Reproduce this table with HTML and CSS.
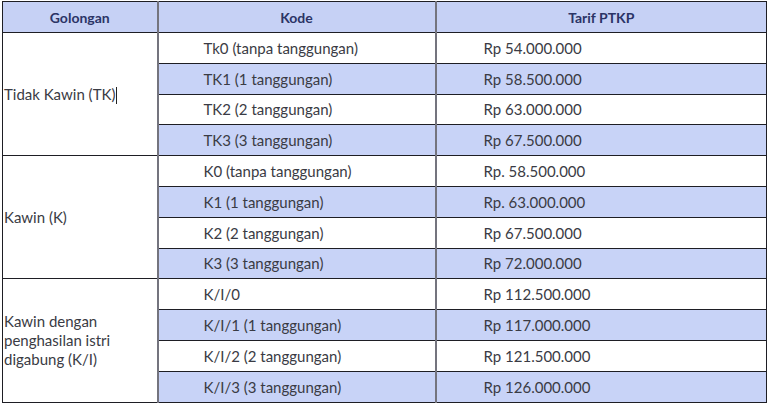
FILE: index.html
```html
<!DOCTYPE html>
<html lang="id">
<head>
<meta charset="utf-8">
<title>Tarif PTKP</title>
<link rel="stylesheet" href="styles.css">
</head>
<body>
<table class="ptkp">
  <colgroup>
    <col class="c-gol">
    <col class="c-kode">
    <col class="c-tarif">
  </colgroup>
  <thead>
    <tr><th>Golongan</th><th>Kode</th><th>Tarif PTKP</th></tr>
  </thead>
  <tbody class="grp">
    <tr><td class="gol" rowspan="4">Tidak Kawin (TK)<span class="caret"></span></td><td class="kode">Tk0 (tanpa tanggungan)</td><td class="tarif">Rp 54.000.000</td></tr>
    <tr class="alt"><td class="kode">TK1 (1 tanggungan)</td><td class="tarif">Rp 58.500.000</td></tr>
    <tr><td class="kode">TK2 (2 tanggungan)</td><td class="tarif">Rp 63.000.000</td></tr>
    <tr class="alt"><td class="kode">TK3 (3 tanggungan)</td><td class="tarif">Rp 67.500.000</td></tr>
  </tbody>
  <tbody class="grp">
    <tr><td class="gol" rowspan="4">Kawin (K)</td><td class="kode">K0 (tanpa tanggungan)</td><td class="tarif">Rp. 58.500.000</td></tr>
    <tr class="alt"><td class="kode">K1 (1 tanggungan)</td><td class="tarif">Rp. 63.000.000</td></tr>
    <tr><td class="kode">K2 (2 tanggungan)</td><td class="tarif">Rp 67.500.000</td></tr>
    <tr class="alt"><td class="kode">K3 (3 tanggungan)</td><td class="tarif">Rp 72.000.000</td></tr>
  </tbody>
  <tbody class="grp">
    <tr><td class="gol" rowspan="4">Kawin dengan<br>penghasilan istri<br>digabung (K/I)</td><td class="kode">K/I/0</td><td class="tarif">Rp 112.500.000</td></tr>
    <tr class="alt"><td class="kode">K/I/1 (1 tanggungan)</td><td class="tarif">Rp 117.000.000</td></tr>
    <tr><td class="kode">K/I/2 (2 tanggungan)</td><td class="tarif">Rp 121.500.000</td></tr>
    <tr class="alt"><td class="kode">K/I/3 (3 tanggungan)</td><td class="tarif">Rp 126.000.000</td></tr>
  </tbody>
</table>
</body>
</html>
```
FILE: styles.css
```css
html, body {
  margin: 0;
  padding: 0;
  background: #ffffff;
}
body {
  padding: 1px 0 0 2px;
  font-family: Lato, "Open Sans", sans-serif;
  font-size: 15px;
  color: #3a3b44;
}
.ptkp {
  border-collapse: collapse;
  width: 764px;
  table-layout: fixed;
  border: 1px solid #1e1e24;
}
.c-gol { width: 155px; }
.c-kode { width: 278px; }
.c-tarif { width: 331px; }
.ptkp th {
  height: 30px;
  padding: 0;
  background: #c6d1f5;
  color: #2b3466;
  font-size: 14px;
  font-weight: bold;
  text-align: center;
  border-bottom: 1px solid #1e1e24;
  border-left: 2px solid #74747e;
}
.ptkp th:first-child { border-left: 1px solid #1e1e24; }
.ptkp td {
  height: 29.8px;
  padding: 0;
  vertical-align: middle;
  border-top: 1px solid #1e1e24;
  border-left: 2px solid #74747e;
}
.ptkp td.gol {
  background: #ffffff;
  padding-left: 1px;
  line-height: 19px;
  border-left: 1px solid #1e1e24;
}
.ptkp td.kode { padding-left: 45px; }
.ptkp td.tarif { padding-left: 47px; }
.ptkp tr.alt td { background: #c8d3f7; }
.caret {
  display: inline-block;
  width: 0;
  height: 17px;
  border-left: 1px solid #222;
  vertical-align: -4px;
  margin-left: 1px;
}
```
